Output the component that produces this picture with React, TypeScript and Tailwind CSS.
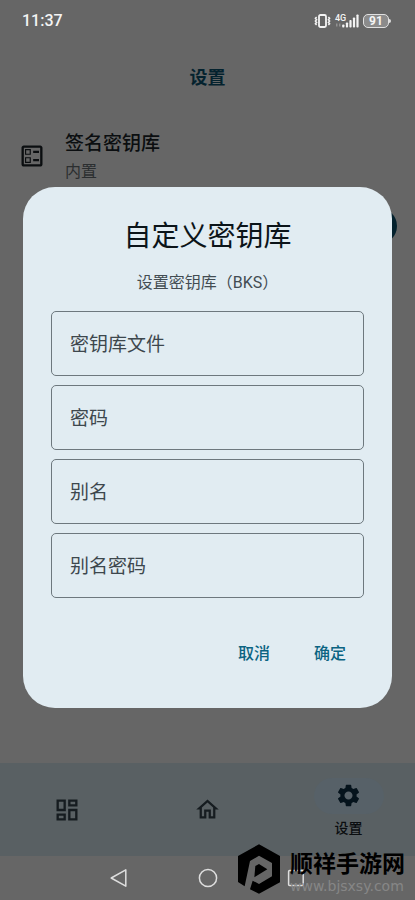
import { useState } from "react";
import {
  MdOutlineBallot,
  MdOutlineDashboard,
  MdOutlineHome,
  MdSettings,
} from "react-icons/md";

const fields = [
  { id: "file", label: "密钥库文件" },
  { id: "password", label: "密码" },
  { id: "alias", label: "别名" },
  { id: "aliasPassword", label: "别名密码" },
];

export default function App() {
  return (
    <div className="relative flex min-h-screen flex-col bg-[#666666] font-['Roboto','Noto_Sans_CJK_SC',sans-serif] text-[#0b0e10]">
      <StatusBar />
      <SettingsPage />
      <BottomNav />
      <SystemNav />
      <KeystoreDialog />
    </div>
  );
}

function StatusBar() {
  return (
    <header className="flex h-[42px] items-center justify-between pr-6 pl-[22px] text-[#f4f4f4]">
      <span className="text-base font-medium">11:37</span>
      <div className="flex items-center gap-1">
        <svg width="17" height="14" viewBox="0 0 17 14" fill="none" stroke="currentColor">
          <rect x="5" y="1" width="7" height="12" rx="1.5" strokeWidth="1.8" />
          <path d="M2.6 3l-1.2 1.3 1.2 1.4-1.2 1.3 1.2 1.4-1.2 1.3L2.6 11M14.4 3l1.2 1.3-1.2 1.4L15.6 7l-1.2 1.4 1.2 1.3-1.2 1.3" strokeWidth="1.5" />
        </svg>
        <div className="relative h-[14px] w-6">
          <span className="absolute top-0 left-0 text-[9px] leading-[8px] font-medium">4G</span>
          <svg width="24" height="14" viewBox="0 0 24 14" fill="currentColor">
            <path d="M1 9.5h1.5v3H1zM4 9.5h1.5v3H4z" opacity="0.3" />
            <rect x="7.2" y="10.5" width="2.2" height="3" rx="0.8" />
            <rect x="10.9" y="8.5" width="2.2" height="5" rx="0.8" />
            <rect x="14.4" y="6" width="2.2" height="7.5" rx="0.8" />
            <rect x="17.9" y="3.5" width="2.2" height="10" rx="0.8" />
            <rect x="21.4" y="0.5" width="2.2" height="13" rx="0.8" />
          </svg>
        </div>
        <div className="flex items-center">
          <span className="flex h-[14px] w-[26px] items-center justify-center rounded-[5px] border border-[#e0e0e0] bg-[#8b8b8b] text-xs font-bold">
            91
          </span>
          <span className="h-1 w-[2px] rounded-r bg-[#e0e0e0]" />
        </div>
      </div>
    </header>
  );
}

function SettingsPage() {
  return (
    <main className="flex-1">
      <h1 className="pt-[22px] text-center text-lg leading-7 font-bold text-[#04222e]">设置</h1>
      <div className="mt-[38px] flex items-start gap-[19px] px-[18px]">
        <MdOutlineBallot size={28} className="mt-3" />
        <div>
          <p className="text-[19px] leading-7 font-medium">签名密钥库</p>
          <p className="text-base leading-7 text-[#2b2e30]">内置</p>
        </div>
      </div>
      <div className="mt-[22px] flex justify-end px-[18px]">
        <button
          type="button"
          role="switch"
          aria-checked="true"
          aria-labelledby="dialog-title"
          className="h-9 w-[60px] rounded-full bg-[#04222e]"
        />
      </div>
    </main>
  );
}

function BottomNav() {
  return (
    <nav className="grid h-[93px] grid-cols-3 items-center gap-2 bg-[#596063]">
      <button type="button" className="flex justify-center text-[#161c20]">
        <MdOutlineDashboard size={28} />
      </button>
      <button type="button" className="flex justify-center text-[#161c20]">
        <MdOutlineHome size={27} />
      </button>
      <button type="button" className="flex flex-col items-center gap-1 pb-1">
        <span className="flex h-9 w-[70px] items-center justify-center rounded-full bg-[#576168] text-[#05131c]">
          <MdSettings size={27} />
        </span>
        <span className="text-sm leading-5 font-medium">设置</span>
      </button>
    </nav>
  );
}

function SystemNav() {
  return (
    <footer className="relative flex h-11 items-center justify-center gap-[69px] text-[#dedede]">
      <svg width="20" height="20" viewBox="0 0 20 20" fill="none" stroke="currentColor" strokeWidth="1.5" strokeLinejoin="round">
        <path d="M16.8 1.8v16.4L2.2 10z" />
      </svg>
      <svg width="20" height="20" viewBox="0 0 20 20" fill="none" stroke="currentColor" strokeWidth="1.5">
        <circle cx="10" cy="10" r="8.6" />
      </svg>
      <svg width="20" height="20" viewBox="0 0 20 20" fill="none" stroke="currentColor" strokeWidth="1.5">
        <rect x="1.6" y="2.6" width="14.6" height="14.8" rx="1" />
      </svg>
      <div className="absolute right-[10px] bottom-[6px] flex items-end gap-[10px]">
        <svg width="42" height="50" viewBox="0 0 126 150">
          <path d="M63 1l63 35v79l-63 34-27-13 8-26 19 10 39-23V57L63 35 36 51 20 127 0 114V36z" fill="#000" />
          <path d="M52 66l11-6 25 16-39 24z" fill="#000" />
        </svg>
        <div className="flex flex-col">
          <span className="text-[23px] leading-[26px] font-bold text-black">顺祥手游网</span>
          <span className="font-['DejaVu_Sans',sans-serif] text-sm leading-4 text-[#868686]">
            www.bjsxsy.com
          </span>
        </div>
      </div>
    </footer>
  );
}

function KeystoreDialog() {
  const [values, setValues] = useState<Record<string, string>>({});

  return (
    <div className="absolute inset-0 flex items-center justify-center px-[23px] pb-[5px]">
      <section
        role="dialog"
        aria-labelledby="dialog-title"
        className="w-full rounded-[32px] bg-[#e1ecf2] px-7 pt-[30px] pb-[34px]"
      >
        <h2 id="dialog-title" className="text-center text-[28px] leading-10 text-[#0b1419]">
          自定义密钥库
        </h2>
        <p className="mt-[14px] text-center text-base leading-6 text-[#434c52]">设置密钥库（BKS）</p>

        <div className="mt-4 grid gap-[9px]">
          {fields.map((field) => (
            <label
              key={field.id}
              className="flex h-[65px] items-center gap-3 rounded-[5px] border border-[#6d787e] px-[18px] pt-1 text-[19px] text-[#3d474d]"
            >
              <span className="shrink-0">{field.label}</span>
              <input
                value={values[field.id] ?? ""}
                onChange={(e) => setValues({ ...values, [field.id]: e.target.value })}
                className="w-full min-w-0 bg-transparent outline-none"
              />
            </label>
          ))}
        </div>

        <div className="mt-9 flex justify-end gap-3 pr-[2px] text-base font-medium text-[#0b6482]">
          <button type="button" className="h-10 w-16">
            取消
          </button>
          <button type="button" className="h-10 w-16">
            确定
          </button>
        </div>
      </section>
    </div>
  );
}
